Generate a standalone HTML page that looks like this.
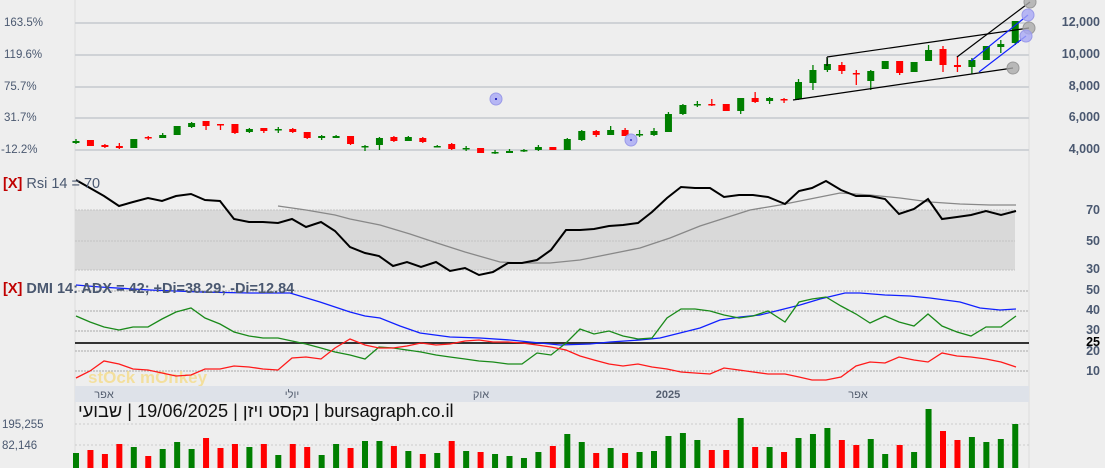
<!DOCTYPE html>
<html><head><meta charset="utf-8">
<style>
html,body{margin:0;padding:0;background:#eeeeee;width:1105px;height:468px;overflow:hidden;font-family:"Liberation Sans","Noto Sans CJK JP",sans-serif}
svg{position:absolute;left:0;top:0}
.t{position:absolute;left:78px;top:401px;font-size:18.2px;color:#111;white-space:pre;display:flex;direction:ltr}
.t span{unicode-bidi:isolate}
</style></head><body>
<svg id="s" width="1105" height="468" xmlns="http://www.w3.org/2000/svg" font-family="Liberation Sans, sans-serif">
<line x1="75" y1="0" x2="75" y2="468" stroke="#dcdcdc"/>
<line x1="1029" y1="0" x2="1029" y2="468" stroke="#dcdcdc"/>
<g stroke="#cfd2d6" stroke-width="2">
<line x1="75" y1="23" x2="1029" y2="23"/><line x1="75" y1="55" x2="1029" y2="55"/><line x1="75" y1="87" x2="1029" y2="87"/><line x1="75" y1="118" x2="1029" y2="118"/><line x1="75" y1="150" x2="1029" y2="150"/>
</g>
<g fill="#4a5870" font-size="11.5">
<text x="4" y="26">163.5%</text><text x="4" y="58">119.6%</text><text x="4" y="90">75.7%</text><text x="4" y="121">31.7%</text><text x="1" y="153">-12.2%</text>
</g>
<g fill="#4a5870" font-size="12.5" font-weight="bold" text-anchor="end">
<text x="1100" y="26">12,000</text><text x="1100" y="58">10,000</text><text x="1100" y="90">8,000</text><text x="1100" y="121">6,000</text><text x="1100" y="153">4,000</text>
<text x="1100" y="214">70</text><text x="1100" y="245">50</text><text x="1100" y="273">30</text>
<text x="1100" y="294">50</text><text x="1100" y="314">40</text><text x="1100" y="334">30</text><text x="1100" y="355">20</text><text x="1100" y="375">10</text>
</g>
<text x="1100" y="346" font-size="12.5" font-weight="bold" text-anchor="end" fill="#000">25</text>
<rect x="75" y="210" width="940" height="60" fill="#d9d9d9"/>
<g stroke="#c4c4c4" stroke-dasharray="2,1"><line x1="75" y1="210" x2="1015" y2="210"/><line x1="75" y1="241" x2="1015" y2="241"/><line x1="75" y1="270" x2="1015" y2="270"/></g>
<polyline fill="none" stroke="#888" stroke-width="1.3" points="278,206 306,210 335,215 350,219 380,225 410,234 437,243 465,252 500,262 520,263 550,263 580,260 610,254 640,248 670,238 700,226 725,218 750,210 780,205 810,199 840,193 870,195 900,198 930,202 960,204 990,205 1016,205"/>
<polyline fill="none" stroke="#000" stroke-width="2" points="76,180 90,188 104,196 119,206 133,202 148,198 162,201 176,196 191,194 205,200 220,201 234,219 249,222 263,222 278,223 292,219 306,227 321,222 335,231 350,247 365,253 379,256 393,266 407,262 421,267 436,262 450,271 465,268 479,275 493,272 508,263 522,263 537,260 551,250 566,230 580,230 594,229 609,226 623,225 638,223 652,212 667,198 681,187 695,188 710,188 724,197 739,195 753,195 768,197 785,204 799,191 812,188 826,181 841,190 856,196 870,196 885,199 899,214 914,209 928,199 942,219 957,217 971,215 986,211 1001,215 1016,211"/>
<text x="3" y="188" font-size="14.5" font-weight="bold"><tspan fill="#c00000">[X]</tspan><tspan fill="#4a5870" font-weight="normal"> Rsi 14 = 70</tspan></text>
<g stroke="#aaa" stroke-dasharray="2,1"><line x1="75" y1="291" x2="1029" y2="291"/><line x1="75" y1="311" x2="1029" y2="311"/><line x1="75" y1="331" x2="1029" y2="331"/><line x1="75" y1="351" x2="1029" y2="351"/><line x1="75" y1="371" x2="1029" y2="371"/></g>
<line x1="75" y1="343" x2="1029" y2="343" stroke="#333" stroke-width="2"/>
<text x="88" y="383" font-size="17" font-weight="bold" fill="#f5dc8a" opacity="0.8">stOck mOnkey</text>
<polyline fill="none" stroke="#1020ff" stroke-width="1.3" points="76,285 100,287 150,290 200,292 250,293 290,293 320,302 350,312 365,316 380,318 400,326 420,333 450,337 480,338 510,340 540,343 560,345 590,344 610,342 640,340 660,338 680,333 700,328 720,320 740,317 760,315 780,310 800,305 820,299 845,293 860,293 885,295 910,296 930,298 960,302 980,308 1000,310 1016,309"/>
<polyline fill="none" stroke="#1a8a1a" stroke-width="1.3" points="76,316 90,322 104,327 119,330 133,327 148,327 162,319 176,312 191,308 205,318 220,324 234,332 249,336 263,338 278,338 292,341 306,344 321,348 335,352 350,355 365,359 379,347 393,348 407,350 421,352 436,355 450,357 465,359 479,361 493,362 508,364 522,364 537,353 551,355 566,343 580,329 594,334 609,331 623,336 638,339 652,338 667,318 681,309 695,309 710,311 724,315 739,318 753,316 768,311 785,322 799,302 812,299 826,297 841,306 856,314 870,323 885,316 899,322 914,326 928,314 942,326 957,332 971,336 986,327 1001,327 1016,316"/>
<polyline fill="none" stroke="#ff1a1a" stroke-width="1.3" points="76,378 90,371 104,361 119,364 133,369 148,370 162,373 176,376 191,375 205,369 220,369 234,366 249,367 263,369 278,370 292,358 306,357 321,359 335,348 350,339 365,345 379,348 393,348 407,346 421,343 436,345 450,344 465,341 479,340 493,342 508,342 522,343 537,345 551,347 566,350 580,356 594,360 609,364 623,366 638,364 652,367 667,369 681,372 695,373 710,374 724,368 739,370 753,372 768,374 785,374 799,377 812,380 826,380 841,377 856,366 870,362 885,363 899,357 914,360 928,362 942,353 957,356 971,357 986,359 1001,362 1016,367"/>
<text x="3" y="293" font-size="14.5" font-weight="bold"><tspan fill="#c00000">[X]</tspan><tspan fill="#4a5870"> DMI 14: ADX = 42; +Di=38.29; -Di=12.84</tspan></text>
<rect x="75" y="386" width="954" height="16" fill="#dee2e9"/>
<g fill="#555f70" font-size="11" text-anchor="middle">
<text x="104" y="398">אפר</text><text x="292" y="398">יולי</text><text x="481" y="398">אוק</text><text x="668" y="398" font-weight="bold">2025</text><text x="858" y="398">אפר</text>
</g>
<g stroke="#ccc" stroke-dasharray="2,2"><line x1="75" y1="424" x2="1029" y2="424"/><line x1="75" y1="445" x2="1029" y2="445"/></g>
<g fill="#4a5870" font-size="11.5"><text x="2" y="428">195,255</text><text x="2" y="449">82,146</text></g>
<g id="vol"></g>
<g id="cdl"></g>
<g stroke="#000" stroke-width="1.2">
<line x1="793" y1="100" x2="1013" y2="68"/><line x1="827" y1="57" x2="1029" y2="28"/><line x1="957" y1="57" x2="1030" y2="2"/><line x1="827" y1="57" x2="827" y2="66"/>
</g>
<g stroke="#1020ff" stroke-width="1.2"><line x1="971" y1="61" x2="1028" y2="15"/><line x1="979" y1="72" x2="1026" y2="36"/></g>
<g fill="#aaa" fill-opacity="0.8" stroke="#999"><circle cx="1013" cy="68" r="6"/><circle cx="1029" cy="28" r="6"/><circle cx="1030" cy="2" r="6"/></g>
<g fill="#a8a8f5" fill-opacity="0.8" stroke="#9a9ae8"><circle cx="1028" cy="15" r="6"/><circle cx="1026" cy="36" r="6"/><circle cx="496" cy="99" r="6"/><circle cx="631" cy="140" r="6"/></g>
<circle cx="496" cy="99" r="1" fill="#00a"/><rect x="630" y="139.5" width="2" height="1" fill="#00a"/>
</svg>
<div class="t"><span>שבועי</span><span> | </span><span>19/06/2025</span><span> | </span><span>נקסט ויזן</span><span> | </span><span>bursagraph.co.il</span></div>
<script>
var C=[['g',141,143,139,144],['r',140,146,140,146],['r',145,147,144,148],['r',146,148,143,149],['g',139,148,139,148],['r',137,138,136,140],['g',135,138,133,138],['g',126,135,126,135],['g',123,127,122,128],['r',121,126,121,130],['r',124,125,124,130],['r',124,133,124,134],['g',129,132,128,133],['r',128,131,128,133],['g',129,130,127,133],['r',129,132,128,133],['r',132,138,132,139],['g',136,138,135,140],['g',136,138,135,138],['r',136,144,136,145],['g',146,147,145,151],['g',138,145,137,150],['r',137,141,136,142],['g',137,141,136,141],['r',138,142,137,143],['g',146,147,145,147],['r',144,149,143,150],['g',148,149,146,151],['r',148,153,148,153],['g',152,153,150,154],['g',151,153,149,153],['g',150,151,149,152],['g',147,150,145,151],['r',147,150,147,150],['g',139,150,138,150],['g',131,140,130,141],['r',131,135,130,137],['g',130,135,126,135],['r',130,136,128,136],['g',134,135,130,137],['g',131,135,128,136],['g',114,132,112,132],['g',105,114,104,115],['g',104,105,101,107],['r',104,105,99,106],['r',104,111,104,111],['g',98,111,98,114],['r',98,102,92,103],['g',98,101,97,104],['r',99,100,98,103],['g',82,99,79,100],['g',70,83,65,90],['g',64,70,58,72],['r',65,71,62,74],['r',73,74,70,85],['g',71,81,70,90],['g',61,69,61,69],['r',61,73,61,75],['g',62,72,62,72],['g',50,61,45,61],['r',49,65,46,72],['r',65,67,56,72],['g',60,67,58,74],['g',46,60,46,60],['g',44,47,40,53],['g',21,43,21,45]];
var V=[453,450,454,444,447,456,449,442,449,438,448,444,447,444,455,444,447,455,444,448,441,441,446,451,454,453,441,451,452,454,456,458,452,446,434,442,453,448,453,452,451,436,433,440,450,450,418,447,447,452,438,434,428,440,445,439,454,445,452,409,431,440,437,442,439,424];
var cd='',vd='';
for(var i=0;i<C.length;i++){var c=C[i],x=76+14.45*i,col=c[0]=='g'?'#007f00':'#ff0000';
cd+='<line x1="'+x+'" y1="'+c[3]+'" x2="'+x+'" y2="'+c[4]+'" stroke="'+col+'" stroke-width="1.3"/>';
var h=Math.max(c[2]-c[1],1.5);cd+='<rect x="'+(x-3.5)+'" y="'+c[1]+'" width="7" height="'+h+'" fill="'+col+'"/>';
if(i<V.length)vd+='<rect x="'+(x-3)+'" y="'+V[i]+'" width="6" height="'+(468-V[i])+'" fill="'+col+'"/>';}
document.getElementById('cdl').innerHTML=cd;document.getElementById('vol').innerHTML=vd;
</script>
</body></html>
